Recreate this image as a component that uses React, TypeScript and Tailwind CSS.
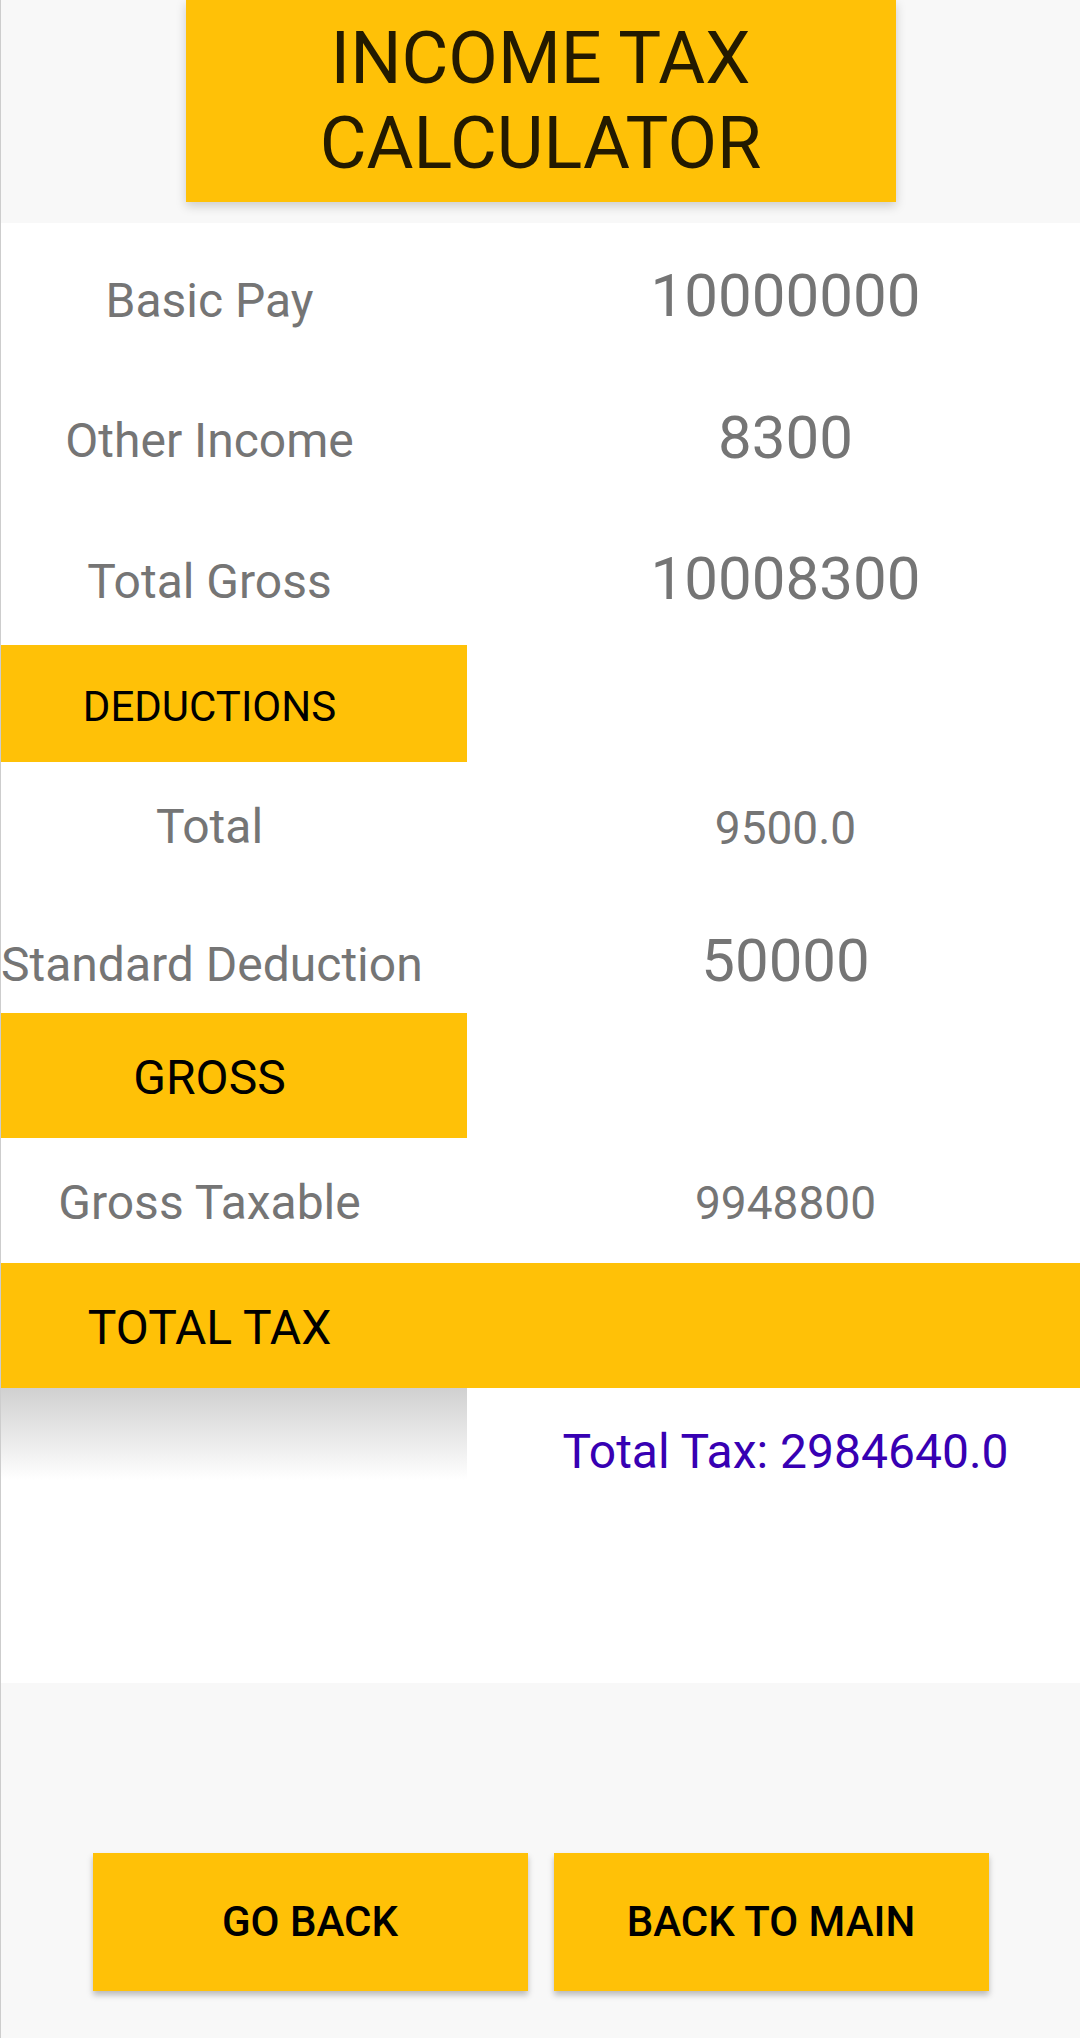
import React from "react";

const F = { fontFamily: "Roboto, 'Noto Sans', Arial, sans-serif" };

export default function App() {
  return (
    <div
      className="w-[1080px] h-[2038px] bg-[#f8f8f8] border-l border-[#cdcdcd] flex flex-col overflow-hidden"
      style={F}
    >
      {/* Header */}
      <div className="h-[223px] flex justify-center shrink-0">
        <div className="w-[710px] h-[202px] bg-[#FFC107] shadow-[0_4px_10px_rgba(0,0,0,0.18)] flex flex-col items-center justify-center text-[72px] leading-[85px] text-[#231a00]">
          <span>INCOME TAX</span>
          <span>CALCULATOR</span>
        </div>
      </div>

      {/* White panel */}
      <div className="h-[1460px] bg-white flex flex-col shrink-0 text-[#757575]">
        {/* Basic Pay */}
        <div className="h-[148px] flex items-center shrink-0">
          <div className="w-[417px] text-center text-[48px] leading-none translate-y-[4px]">Basic Pay</div>
          <div className="flex-1 ml-[73px] text-center text-[60px] leading-none translate-y-[-1px]">10000000</div>
        </div>
        {/* Other Income */}
        <div className="h-[140px] flex items-center shrink-0">
          <div className="w-[417px] text-center text-[48px] leading-none">Other Income</div>
          <div className="flex-1 ml-[73px] text-center text-[60px] leading-none translate-y-[-3px]">8300</div>
        </div>
        {/* Total Gross */}
        <div className="h-[134px] flex items-center shrink-0">
          <div className="w-[417px] text-center text-[48px] leading-none translate-y-[4px]">Total Gross</div>
          <div className="flex-1 ml-[73px] text-center text-[60px] leading-none translate-y-[1px]">10008300</div>
        </div>
        {/* Deductions */}
        <div className="h-[117px] w-[466px] bg-[#FFC107] flex items-center shrink-0">
          <div className="w-[417px] text-center text-[42px] leading-none text-black translate-y-[3px]">DEDUCTIONS</div>
        </div>
        {/* Total */}
        <div className="h-[128px] flex items-center shrink-0">
          <div className="w-[417px] text-center text-[48px] leading-none translate-y-[1px]">Total</div>
          <div className="flex-1 ml-[73px] text-center text-[46px] leading-none translate-y-[2px]">9500.0</div>
        </div>
        {/* Standard Deduction */}
        <div className="h-[123px] flex items-center shrink-0">
          <div className="w-[417px] text-center text-[48px] leading-none whitespace-nowrap translate-y-[13px]">Standard Deduction</div>
          <div className="flex-1 ml-[73px] text-center text-[60px] leading-none translate-y-[9px]">50000</div>
        </div>
        {/* Gross */}
        <div className="h-[125px] w-[466px] bg-[#FFC107] flex items-center shrink-0">
          <div className="w-[417px] text-center text-[48px] leading-none text-black translate-y-[2px]">GROSS</div>
        </div>
        {/* Gross Taxable */}
        <div className="h-[125px] flex items-center shrink-0">
          <div className="w-[417px] text-center text-[48px] leading-none translate-y-[2px]">Gross Taxable</div>
          <div className="flex-1 ml-[73px] text-center text-[46px] leading-none translate-y-[2px]">9948800</div>
        </div>
        {/* Total Tax bar */}
        <div className="h-[125px] bg-[#FFC107] flex items-center shrink-0">
          <div className="w-[417px] text-center text-[48px] leading-none text-black translate-y-[2px]">TOTAL TAX</div>
        </div>
        {/* Result */}
        <div className="flex-1 flex">
          <div className="w-[466px] h-[92px] bg-linear-to-b from-[#d0d0d0] to-white"></div>
          <div className="flex-1 pl-[24px] flex justify-center">
            <div className="mt-[40px] text-[48px] leading-none text-[#3700B3]">Total Tax: 2984640.0</div>
          </div>
        </div>
      </div>

      {/* Buttons */}
      <div className="flex justify-center gap-[26px] mt-[170px]">
        <div className="w-[435px] h-[138px] bg-[#FFC107] shadow-[0_4px_6px_rgba(0,0,0,0.25)] flex items-center justify-center text-[42px] font-medium text-black leading-none">
          GO BACK
        </div>
        <div className="w-[435px] h-[138px] bg-[#FFC107] shadow-[0_4px_6px_rgba(0,0,0,0.25)] flex items-center justify-center text-[42px] font-medium text-black leading-none">
          BACK TO MAIN
        </div>
      </div>
    </div>
  );
}
